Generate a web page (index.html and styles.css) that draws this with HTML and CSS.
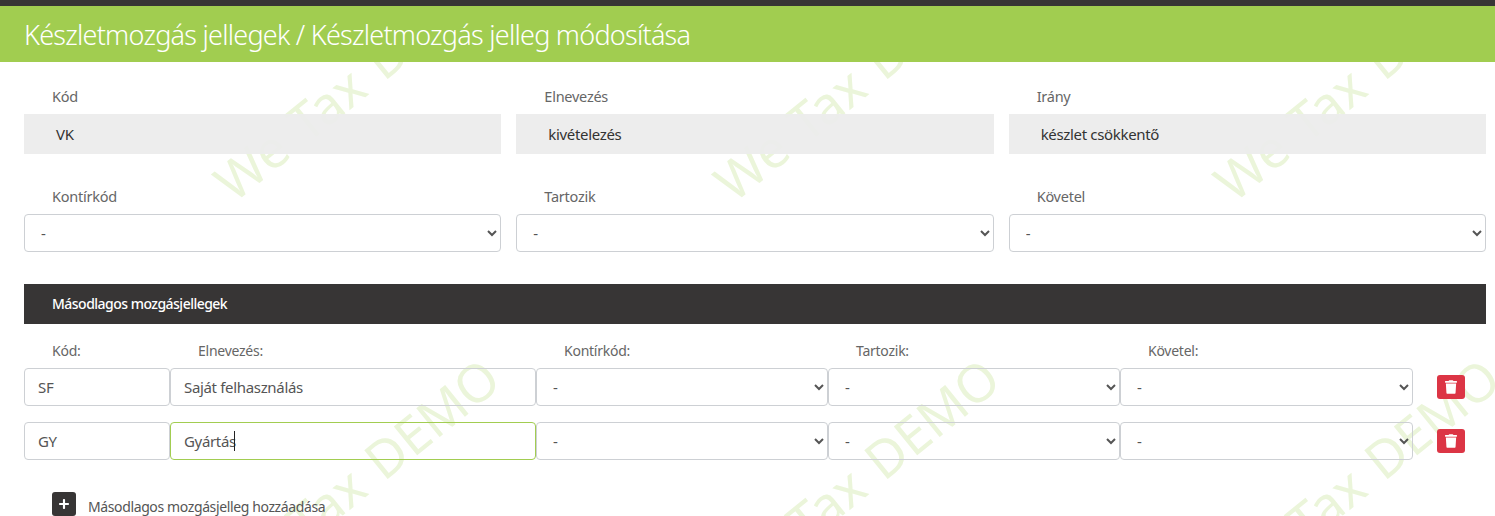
FILE: index.html
```html
<!DOCTYPE html>
<html lang="hu">
<head>
<meta charset="utf-8">
<title>Készletmozgás jelleg módosítása</title>
<link rel="stylesheet" href="styles.css">
</head>
<body>
<div class="watermark" aria-hidden="true">
  <div class="wm-grid">
    <span class="wm-cell"><span class="wm-text">We Tax DEMO</span></span>
    <span class="wm-cell"><span class="wm-text">We Tax DEMO</span></span>
    <span class="wm-cell"><span class="wm-text">We Tax DEMO</span></span>
    <span class="wm-cell"><span class="wm-text">We Tax DEMO</span></span>
    <span class="wm-cell"><span class="wm-text">We Tax DEMO</span></span>
    <span class="wm-cell"><span class="wm-text">We Tax DEMO</span></span>
  </div>
</div>
<div class="page">
  <header class="title-bar"><h1>Készletmozgás jellegek / Készletmozgás jelleg módosítása</h1></header>
  <section class="form-grid">
    <div class="group"><label>Kód</label><div class="readonly">VK</div></div>
    <div class="group"><label>Elnevezés</label><div class="readonly">kivételezés</div></div>
    <div class="group"><label>Irány</label><div class="readonly">készlet csökkentő</div></div>
    <div class="group sel"><label>Kontírkód</label><select class="control"><option>-</option></select></div>
    <div class="group sel"><label>Tartozik</label><select class="control"><option>-</option></select></div>
    <div class="group sel"><label>Követel</label><select class="control"><option>-</option></select></div>
  </section>
  <h2 class="section-bar">Másodlagos mozgásjellegek</h2>
  <section class="table">
    <div class="row head">
      <span>Kód:</span><span>Elnevezés:</span><span>Kontírkód:</span><span>Tartozik:</span><span>Követel:</span>
    </div>
    <div class="row">
      <input class="control" value="SF">
      <input class="control" value="Saját felhasználás">
      <select class="control"><option>-</option></select>
      <select class="control"><option>-</option></select>
      <select class="control"><option>-</option></select>
      <button class="del" type="button" aria-label="Törlés"><svg viewBox="0 0 448 512"><path d="M432 32H312l-9.4-18.7A24 24 0 0 0 281.1 0H166.8a23.72 23.72 0 0 0-21.4 13.3L136 32H16A16 16 0 0 0 0 48v32a16 16 0 0 0 16 16h416a16 16 0 0 0 16-16V48a16 16 0 0 0-16-16zM53.2 467a48 48 0 0 0 47.9 45h245.8a48 48 0 0 0 47.9-45L416 128H32z"/></svg></button>
    </div>
    <div class="row">
      <input class="control" value="GY">
      <div class="caret-wrap"><input class="control focus" value="Gyártás"><i class="caret"></i></div>
      <select class="control"><option>-</option></select>
      <select class="control"><option>-</option></select>
      <select class="control"><option>-</option></select>
      <button class="del" type="button" aria-label="Törlés"><svg viewBox="0 0 448 512"><path d="M432 32H312l-9.4-18.7A24 24 0 0 0 281.1 0H166.8a23.72 23.72 0 0 0-21.4 13.3L136 32H16A16 16 0 0 0 0 48v32a16 16 0 0 0 16 16h416a16 16 0 0 0 16-16V48a16 16 0 0 0-16-16zM53.2 467a48 48 0 0 0 47.9 45h245.8a48 48 0 0 0 47.9-45L416 128H32z"/></svg></button>
    </div>
  </section>
  <div class="add">
    <button class="add-btn" type="button" aria-label="Hozzáadás"><svg viewBox="0 0 448 512"><path d="M416 208H272V64c0-17.67-14.33-32-32-32h-32c-17.67 0-32 14.33-32 32v144H32c-17.67 0-32 14.33-32 32v32c0 17.67 14.33 32 32 32h144v144c0 17.67 14.33 32 32 32h32c17.67 0 32-14.33 32-32V304h144c17.67 0 32-14.33 32-32v-32c0-17.67-14.33-32-32-32z"/></svg></button>
    <span class="add-label">Másodlagos mozgásjelleg hozzáadása</span>
  </div>
</div>
</body>
</html>
```
FILE: styles.css
```css
* { box-sizing: border-box; }
html, body { margin: 0; height: 100%; overflow: hidden; background: #fff; }
body { font-family: "Noto Sans", "Open Sans", sans-serif; font-size: 14px; letter-spacing: -0.3px; color: #444; position: relative; }

.watermark { position: absolute; inset: 0; overflow: hidden; z-index: 0; }
.wm-grid { display: grid; grid-template-columns: repeat(3, 500px); grid-auto-rows: 400px; margin: -122px 0 0 106px; }
.wm-cell { display: flex; align-items: center; justify-content: center; }
.wm-text { font-size: 52px; letter-spacing: 0; word-spacing: 4px; white-space: nowrap; color: #ebf5da; transform: rotate(-39deg); }

.page { position: relative; z-index: 1; height: 516px; border-top: 6px solid #373535; }
.title-bar { background: #a1cd50; height: 56px; display: flex; align-items: center; padding-left: 24px; }
h1 { margin: 0; font-size: 27px; font-weight: 300; color: #fff; letter-spacing: -0.75px; }

.form-grid { display: grid; grid-template-columns: repeat(3, 1fr); column-gap: 15px; padding: 21px 9px 0 24px; row-gap: 28px; }
.group label { display: block; height: 31px; line-height: 27px; padding-left: 28px; color: #666; font-size: 14.5px; letter-spacing: -0.25px; }
.readonly { height: 40px; line-height: 41px; padding-left: 32px; background: rgba(236, 236, 236, 0.94); color: #333; font-size: 15px; letter-spacing: -0.33px; }
.group.sel label { height: 32px; line-height: 29px; }

.control { display: block; width: 100%; height: 38px; background: transparent; border: 1px solid #cdd0d4; border-radius: 4px; padding: 0 13px; font: inherit; font-size: 15px; letter-spacing: -0.33px; color: #555; outline: none; }
select.control { padding-left: 12px; }
.control.focus { border-color: #a2cd51; }

.section-bar { margin: 32px 9px 0 24px; height: 40px; line-height: 40px; padding-left: 28px; background: #373535; color: #fff; font-size: 14px; font-weight: 500; letter-spacing: -0.52px; }

.table { margin: 0 9px 0 24px; padding-top: 17px; }
.row { display: grid; grid-template-columns: 146px 366px 292px 292px 293px 1fr; align-items: center; height: 38px; margin-bottom: 16px; }
.row.head { height: 27px; margin-bottom: 0; color: #666; align-items: start; line-height: 20px; letter-spacing: -0.25px; }
.row.head span { padding-left: 28px; }
.caret-wrap { position: relative; }
.caret { position: absolute; left: 64px; top: 9px; width: 1px; height: 20px; background: #222; }

.del { width: 28px; height: 24px; margin-left: 24px; padding: 0; border: 0; border-radius: 3px; background: #dc3545; display: flex; align-items: center; justify-content: center; }
.del svg { width: 12px; height: 14px; fill: #fff; }

.add { display: flex; align-items: center; gap: 12px; margin: 32px 0 0 52px; color: #555; }
.add-label { margin-top: 4px; letter-spacing: -0.38px; }
.add-btn { width: 24px; height: 24px; padding: 0; border: 0; border-radius: 3px; background: #373535; display: flex; align-items: center; justify-content: center; }
.add-btn svg { width: 10px; height: 12px; fill: #fff; }
```
